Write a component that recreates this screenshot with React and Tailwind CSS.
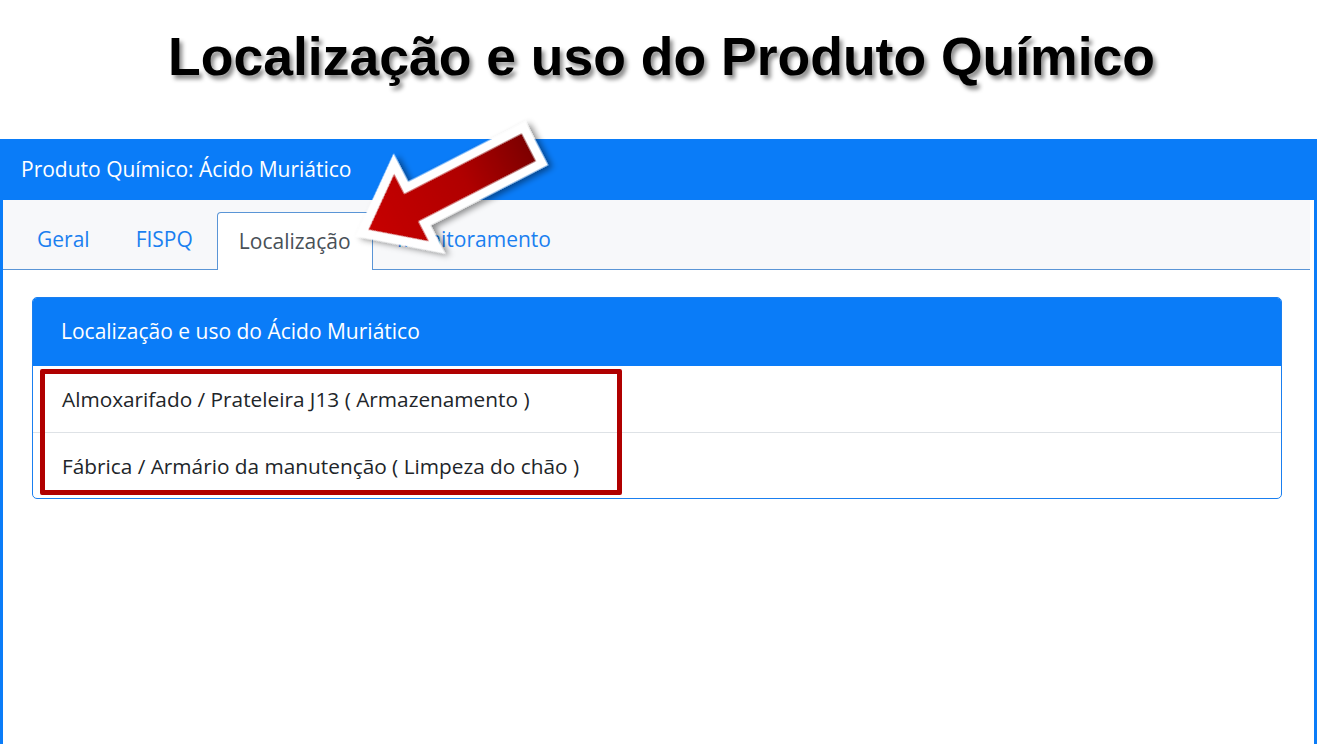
const tabs = ["Geral", "FISPQ", "Localização", "Monitoramento"];
const locais = [
  "Almoxarifado / Prateleira J13 ( Armazenamento )",
  "Fábrica / Armário da manutenção ( Limpeza do chão )",
];

function Arrow() {
  // seta vermelha desenhada apontando para a esquerda e girada
  return (
    <svg className="absolute left-0 top-0 pointer-events-none" width="1323" height="744">
      <defs>
        <linearGradient id="redGrad" x1="0" y1="0" x2="1" y2="0">
          <stop offset="0" stopColor="#c80000" />
          <stop offset="0.6" stopColor="#b00000" />
          <stop offset="1" stopColor="#7a0000" />
        </linearGradient>
        <filter id="shadow" x="-20%" y="-20%" width="140%" height="140%">
          <feDropShadow dx="3" dy="4" stdDeviation="3" floodColor="#000" floodOpacity="0.45" />
        </filter>
      </defs>
      <g transform="translate(362 233) rotate(-27.2)" filter="url(#shadow)">
        <polygon
          points="0,0 60,-47 60,-20 192,-20 192,20 60,20 60,47"
          fill="url(#redGrad)"
          stroke="#fff"
          strokeWidth="9"
          strokeLinejoin="miter"
        />
      </g>
    </svg>
  );
}

export default function App() {
  return (
    <div className="relative w-[1323px] h-[744px] overflow-hidden bg-white" style={{ fontFamily: "'Open Sans', Lato, sans-serif" }}>
      <div className="h-[139px] flex justify-center pt-[25px]">
        <h1
          className="text-[53.5px] leading-[64px] font-bold text-black"
          style={{ fontFamily: "'Liberation Sans', Arial, sans-serif", textShadow: "3px 4px 4px rgba(0,0,0,0.45)" }}
        >
          Localização e uso do Produto Químico
        </h1>
      </div>

      <div className="w-[1317px] h-[605px] border-l-[3px] border-r-[3px] border-[#0a7cf8] flex flex-col">
        <div className="h-[61px] bg-[#0a7cf8] text-white text-[21px] flex items-center pl-[18px]">
          Produto Químico: Ácido Muriático
        </div>

        <div className="h-[70px] mr-[4px] bg-[#f7f8fa] border-b border-[#5a95d6] flex items-end pl-[12px] gap-[2px]">
          {tabs.map((t) => {
            const active = t === "Localização";
            return (
              <div
                key={t}
                className={
                  active
                    ? "h-[58px] -mb-px px-[21px] flex items-center bg-white border border-b-0 border-[#5a95d6] rounded-t-[4px] text-[21px] text-[#495057]"
                    : "h-[58px] px-[22px] flex items-center text-[21px] text-[#1a7ff0]"
                }
              >
                {t}
              </div>
            );
          })}
        </div>

        <div className="flex-1 bg-white pt-[27px] pl-[29px] pr-[32px]">
          <div className="relative w-[1250px] border border-[#1a7ff0] rounded-[5px] overflow-hidden">
            <div className="h-[68px] bg-[#0a7cf8] text-white text-[21px] flex items-center pl-[28px]">
              Localização e uso do Ácido Muriático
            </div>
            {locais.map((l, i) => (
              <div
                key={l}
                className={
                  "h-[66px] flex items-center pl-[29px] pt-[2px] text-[20.8px] text-[#212529] " +
                  (i > 0 ? "border-t border-[#dee2e6]" : "")
                }
              >
                {l}
              </div>
            ))}
            <div className="absolute left-[7px] top-[71px] w-[582px] h-[126px] border-[5px] border-[#b00000] rounded-[2px]" />
          </div>
        </div>
      </div>

      <Arrow />
    </div>
  );
}
